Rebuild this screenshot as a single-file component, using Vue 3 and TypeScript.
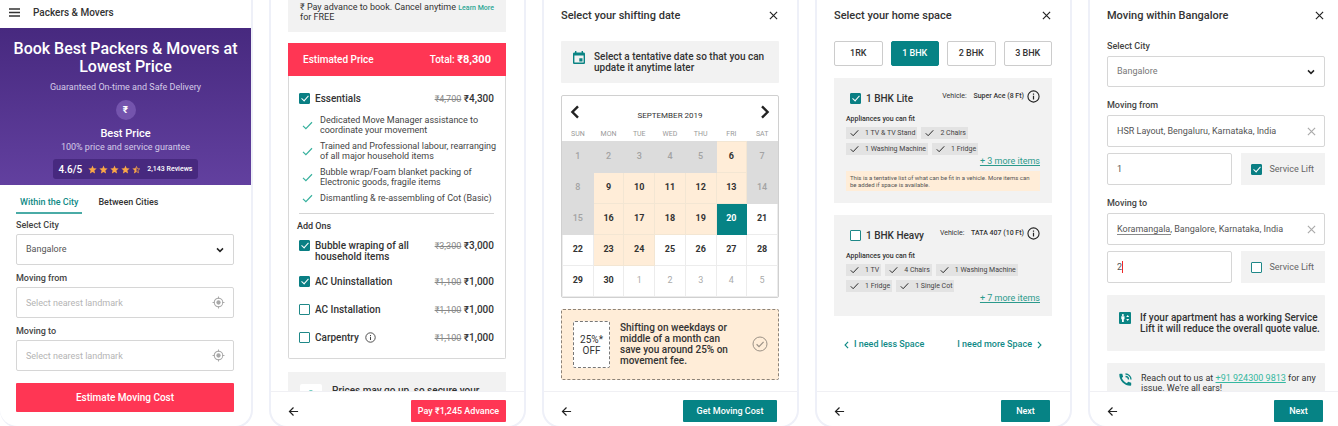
<script setup lang="ts">
import { reactive, ref } from 'vue'

interface AddOn { name: string; was: string; now: string; on: boolean; info?: boolean }
interface Plan { name: string; vehicle: string; on: boolean; fits: string[]; more: string; note?: string }
interface Day { n: number; kind: string }

const tab = ref('Within the City')
const city = ref('Bangalore')
const from = ref('')
const to = ref('')

const inclusions: string[] = [
  'Dedicated Move Manager assistance to coordinate your movement',
  'Trained and Professional labour, rearranging of all major household items',
  'Bubble wrap/Foam blanket packing of Electronic goods, fragile items',
  'Dismantling & re-assembling of Cot (Basic)',
]
const essentials = ref(true)
const addOns = reactive<AddOn[]>([
  { name: 'Bubble wraping of all household items', was: '₹3,300', now: '₹3,000', on: true },
  { name: 'AC Uninstallation', was: '₹1,100', now: '₹1,000', on: true },
  { name: 'AC Installation', was: '₹1,100', now: '₹1,000', on: false },
  { name: 'Carpentry', was: '₹1,100', now: '₹1,000', on: false, info: true },
])

const weekdays = ['SUN', 'MON', 'TUE', 'WED', 'THU', 'FRI', 'SAT']
const offer = [6, 9, 10, 11, 12, 13, 16, 17, 18, 19, 23, 24]
const picked = ref(20)
const past = [1, 2, 3, 4, 5, 7, 8, 14, 15]
const days: Day[] = Array.from({ length: 35 }, (_, i) => {
  const n = i + 1
  if (n > 30) return { n: n - 30, kind: 'next' }
  if (past.includes(n)) return { n, kind: 'past' }
  return { n, kind: offer.includes(n) ? 'offer' : 'open' }
})
const weeks: Day[][] = [0, 7, 14, 21, 28].map((s) => days.slice(s, s + 7))
const choose = (d: Day) => {
  if (d.kind === 'offer' || d.kind === 'open') picked.value = d.n
}

const sizes = ['1RK', '1 BHK', '2 BHK', '3 BHK']
const size = ref('1 BHK')
const plans = reactive<Plan[]>([
  {
    name: '1 BHK Lite', vehicle: 'Super Ace (8 Ft)', on: true,
    fits: ['1 TV & TV Stand', '2 Chairs', '1 Washing Machine', '1 Fridge'],
    more: '+ 3 more items',
    note: 'This is a tentative list of what can be fit in a vehicle. More items can be added if space is available.',
  },
  {
    name: '1 BHK Heavy', vehicle: 'TATA 407 (10 Ft)', on: false,
    fits: ['1 TV', '4 Chairs', '1 Washing Machine', '1 Fridge', '1 Single Cot'],
    more: '+ 7 more items',
  },
])

const stops = reactive([
  { id: 'from', label: 'Moving from', place: 'HSR Layout, Bengaluru, Karnataka, India', floor: '1', lift: true, editing: false },
  { id: 'to', label: 'Moving to', place: 'Koramangala, Bangalore, Karnataka, India', floor: '2', lift: false, editing: true },
])
</script>

<template>
  <svg class="defs" aria-hidden="true">
    <symbol id="i-chev" viewBox="0 0 10 10"><path d="M2 3.4 5 6.4 8 3.4" fill="none" stroke="currentColor" stroke-width="1.5" /></symbol>
    <symbol id="i-target" viewBox="0 0 14 14">
      <circle cx="7" cy="7" r="4.6" fill="none" stroke="currentColor" stroke-width="1.1" />
      <circle cx="7" cy="7" r="2.3" fill="currentColor" />
      <path d="M7 .6V3M7 11v2.4M.6 7H3M11 7h2.4" stroke="currentColor" stroke-width="1.2" />
    </symbol>
    <symbol id="i-tick" viewBox="0 0 12 10"><path d="M1 5.4 4.2 8.6 11 1.4" fill="none" stroke="currentColor" stroke-width="1.3" /></symbol>
    <symbol id="i-back" viewBox="0 0 12 12"><path d="M11 6H2M6 1.6 1.6 6 6 10.4" fill="none" stroke="currentColor" stroke-width="1.3" /></symbol>
    <symbol id="i-x" viewBox="0 0 10 10"><path d="M1 1l8 8M9 1 1 9" fill="none" stroke="currentColor" stroke-width="1.3" /></symbol>
    <symbol id="i-info" viewBox="0 0 14 14">
      <circle cx="7" cy="7" r="6" fill="none" stroke="currentColor" stroke-width="1.2" />
      <path d="M7 6.2v4M7 3.7v1.4" stroke="currentColor" stroke-width="1.3" />
    </symbol>
    <symbol id="i-star" viewBox="0 0 10 10"><path d="M5 .6 6.3 3.7 9.6 4 7.1 6.2 7.9 9.4 5 7.7 2.1 9.4 2.9 6.2.4 4l3.3-.3z" fill="currentColor" /></symbol>
    <symbol id="i-half" viewBox="0 0 10 10">
      <path d="M5 .6V7.7L2.1 9.4 2.9 6.2.4 4l3.3-.3z" fill="currentColor" />
      <path d="M5 1.6 6 4.1 8.6 4.3 6.6 6 7.2 8.6 5 7.3" fill="none" stroke="currentColor" stroke-width=".8" />
    </symbol>
  </svg>

  <main class="screens">
    <section class="phone first">
      <header class="appbar">
        <button class="icon-btn" aria-label="Menu">
          <svg width="11" height="9" viewBox="0 0 11 9"><path d="M0 1h11M0 4.5h11M0 8h11" stroke="#333" stroke-width="1.5" /></svg>
        </button>
        <span>Packers &amp; Movers</span>
      </header>
      <div class="hero">
        <h1>Book Best Packers &amp; Movers at Lowest Price</h1>
        <p class="soft">Guaranteed On-time and Safe Delivery</p>
        <div class="coin">₹</div>
        <strong>Best Price</strong>
        <p class="soft">100% price and service gurantee</p>
        <div class="rating">
          <b>4.6/5</b>
          <span class="stars">
            <svg v-for="i in 4" :key="i"><use href="#i-star" /></svg>
            <svg><use href="#i-half" /></svg>
          </span>
          <small>2,143 Reviews</small>
        </div>
      </div>
      <nav class="tabs">
        <button v-for="t in ['Within the City', 'Between Cities']" :key="t" :class="{ active: tab === t }" @click="tab = t">{{ t }}</button>
      </nav>
      <form class="quote" @submit.prevent>
        <label for="q-city">Select City</label>
        <div class="field">
          <select id="q-city" v-model="city"><option>Bangalore</option></select>
          <svg class="chev"><use href="#i-chev" /></svg>
        </div>
        <label for="q-from">Moving from</label>
        <div class="field">
          <input id="q-from" v-model="from" type="text" placeholder="Select nearest landmark" />
          <svg class="target"><use href="#i-target" /></svg>
        </div>
        <label for="q-to">Moving to</label>
        <div class="field">
          <input id="q-to" v-model="to" type="text" placeholder="Select nearest landmark" />
          <svg class="target"><use href="#i-target" /></svg>
        </div>
        <button class="cta">Estimate Moving Cost</button>
      </form>
    </section>

    <section class="phone">
      <div class="content">
        <div class="advance">
          <p>₹ Pay advance to book. Cancel anytime for FREE</p>
          <a href="#">Learn More</a>
        </div>
        <div class="bill">
          <div class="bill-head"><span>Estimated Price</span><span>Total: <b>₹8,300</b></span></div>
          <div class="bill-body">
            <div class="line">
              <input id="essentials" v-model="essentials" type="checkbox" />
              <label for="essentials">Essentials</label>
              <span class="cost"><s>₹4,700</s> ₹4,300</span>
            </div>
            <ul class="inclusions">
              <li v-for="t in inclusions" :key="t"><svg><use href="#i-tick" /></svg><span>{{ t }}</span></li>
            </ul>
            <hr />
            <h3>Add Ons</h3>
            <div v-for="(a, i) in addOns" :key="a.name" class="line addon">
              <input :id="'addon' + i" v-model="a.on" type="checkbox" />
              <label :for="'addon' + i">{{ a.name }}</label>
              <svg v-if="a.info" class="info"><use href="#i-info" /></svg>
              <span class="cost"><s>{{ a.was }}</s> {{ a.now }}</span>
            </div>
          </div>
        </div>
        <div class="secure">
          <span class="lock"><svg width="8" height="10" viewBox="0 0 8 10"><path d="M1.5 5V3.4a2.5 2.5 0 0 1 5 0V5M.6 5h6.8v4.4H.6z" fill="none" stroke="#2fb5a5" stroke-width="1.2" /></svg></span>
          <p>Prices may go up, so secure your</p>
        </div>
      </div>
      <footer>
        <button class="icon-btn" aria-label="Back"><svg class="back"><use href="#i-back" /></svg></button>
        <button class="action red">Pay ₹1,245 Advance</button>
      </footer>
    </section>

    <section class="phone">
      <div class="content">
        <header class="title"><h2>Select your shifting date</h2><button class="icon-btn" aria-label="Close"><svg class="close"><use href="#i-x" /></svg></button></header>
        <div class="hint">
          <svg width="12" height="13" viewBox="0 0 12 13"><path d="M2 1.5V0h1.4v1.5h5.2V0H10v1.5h.7c.7 0 1.3.6 1.3 1.3v8.9c0 .7-.6 1.3-1.3 1.3H1.3C.6 13 0 12.4 0 11.7V2.8c0-.7.6-1.3 1.3-1.3zM1.4 4.6v7h9.2v-7zM6.3 7.2h3.2v3.2H6.3z" fill="#0a8484" fill-rule="evenodd" /></svg>
          <p>Select a tentative date so that you can update it anytime later</p>
        </div>
        <div class="calendar">
          <div class="month">
            <button class="icon-btn" aria-label="Previous month"><svg width="10" height="14" viewBox="0 0 10 14"><path d="M8 1.4 2.4 7 8 12.6" fill="none" stroke="#222" stroke-width="2.4" /></svg></button>
            <span>SEPTEMBER 2019</span>
            <button class="icon-btn" aria-label="Next month"><svg width="10" height="14" viewBox="0 0 10 14"><path d="M2 1.4 7.6 7 2 12.6" fill="none" stroke="#222" stroke-width="2.4" /></svg></button>
          </div>
          <table>
            <thead><tr><th v-for="w in weekdays" :key="w">{{ w }}</th></tr></thead>
            <tbody>
              <tr v-for="(w, i) in weeks" :key="i">
                <td v-for="d in w" :key="d.n" :class="[d.kind, { picked: d.n === picked && d.kind !== 'next' }]" @click="choose(d)">{{ d.n }}</td>
              </tr>
            </tbody>
          </table>
        </div>
        <div class="promo">
          <div class="coupon">25%* OFF</div>
          <p>Shifting on weekdays or middle of a month can save you around 25% on movement fee.</p>
          <svg width="16" height="16" viewBox="0 0 16 16"><circle cx="8" cy="8" r="7" fill="none" stroke="#9b9186" /><path d="M4.6 8.3 7 10.6l4.6-4.8" fill="none" stroke="#9b9186" stroke-width="1.2" /></svg>
        </div>
      </div>
      <footer>
        <button class="icon-btn" aria-label="Back"><svg class="back"><use href="#i-back" /></svg></button>
        <button class="action wide">Get Moving Cost</button>
      </footer>
    </section>

    <section class="phone">
      <div class="content">
        <header class="title"><h2>Select your home space</h2><button class="icon-btn" aria-label="Close"><svg class="close"><use href="#i-x" /></svg></button></header>
        <div class="sizes">
          <button v-for="s in sizes" :key="s" :class="{ active: size === s }" @click="size = s">{{ s }}</button>
        </div>
        <article v-for="(p, i) in plans" :key="p.name" class="plan">
          <div class="plan-head">
            <input :id="'plan' + i" v-model="p.on" type="checkbox" />
            <label :for="'plan' + i">{{ p.name }}</label>
            <span class="vehicle">Vehicle: <b>{{ p.vehicle }}</b></span>
            <svg class="info big"><use href="#i-info" /></svg>
          </div>
          <h3>Appliances you can fit</h3>
          <ul class="chips">
            <li v-for="f in p.fits" :key="f"><svg><use href="#i-tick" /></svg>{{ f }}</li>
          </ul>
          <a href="#" class="more">{{ p.more }}</a>
          <p v-if="p.note" class="note">{{ p.note }}</p>
        </article>
        <div class="space-links">
          <button><svg viewBox="0 0 6 10"><path d="M5 1 1.2 5 5 9" /></svg>I need less Space</button>
          <button>I need more Space<svg viewBox="0 0 6 10"><path d="M1 1l3.8 4L1 9" /></svg></button>
        </div>
      </div>
      <footer>
        <button class="icon-btn" aria-label="Back"><svg class="back"><use href="#i-back" /></svg></button>
        <button class="action">Next</button>
      </footer>
    </section>

    <section class="phone last">
      <div class="content">
        <header class="title"><h2>Moving within Bangalore</h2><button class="icon-btn" aria-label="Close"><svg class="close"><use href="#i-x" /></svg></button></header>
        <form class="route" @submit.prevent>
          <label for="r-city">Select City</label>
          <div class="field city">
            <select id="r-city" v-model="city" class="pale"><option>Bangalore</option></select>
            <svg class="chev"><use href="#i-chev" /></svg>
          </div>
          <template v-for="s in stops" :key="s.id">
            <label :for="'r-' + s.id" class="stop-label">{{ s.label }}</label>
            <div class="field">
              <input :id="'r-' + s.id" v-model="s.place" type="text" spellcheck="false" />
              <span v-if="s.editing" class="composing"></span>
              <button class="icon-btn" aria-label="Clear"><svg class="clear"><use href="#i-x" /></svg></button>
            </div>
            <div class="floor-row">
              <div class="field">
                <input v-model="s.floor" type="text" aria-label="Floor" />
                <span v-if="s.editing" class="caret"></span>
              </div>
              <div class="lift">
                <input :id="'lift-' + s.id" v-model="s.lift" type="checkbox" />
                <label :for="'lift-' + s.id">Service Lift</label>
              </div>
            </div>
          </template>
        </form>
        <div class="hint lift-hint">
          <svg width="12" height="12" viewBox="0 0 12 12"><rect width="12" height="12" rx="1" fill="#0a8484" /><circle cx="3.9" cy="2.9" r="1" fill="#fff" /><path d="M2.3 4.3h3.2v2.9h-.7V10H3V7.2h-.7zM7.2 5.1 8.7 3l1.5 2.1zM7.2 6.9h3L8.7 9z" fill="#fff" /></svg>
          <p>If your apartment has a working Service Lift it will reduce the overall quote value.</p>
        </div>
        <div class="hint reach">
          <svg width="13" height="13" viewBox="0 0 13 13"><path d="M1 .8h2.3l.8 2.9L2.8 5.1C3.7 7.3 5.5 9.1 7.8 10.2l1.4-1.4 3 .9v2.4c0 .4-.3.7-.7.7C5.5 12.8.3 7.5.3 1.5.3 1.1.6.8 1 .8z" fill="#0a8484" /><path d="M6.5 1c3 0 5.5 2.5 5.5 5.5M6.5 3.5c1.7 0 3 1.3 3 3" fill="none" stroke="#0a8484" stroke-width="1.3" /></svg>
          <p>Reach out to us at <a href="tel:+919243009813">+91 924300 9813</a> for any issue. We're all ears!</p>
        </div>
      </div>
      <footer>
        <button class="icon-btn" aria-label="Back"><svg class="back"><use href="#i-back" /></svg></button>
        <button class="action">Next</button>
      </footer>
    </section>
  </main>
</template>

<style>
body { margin: 0; background: #fff; overflow: hidden; }
</style>

<style scoped>
.screens, .screens * { box-sizing: border-box; }
.defs { position: absolute; width: 0; height: 0; }
.screens {
  display: grid;
  grid-template-columns: 253fr 257fr 257fr 257fr 250fr;
  gap: 16px;
  height: 100vh;
  overflow: hidden;
  font: 9px/11px Roboto, "Liberation Sans", sans-serif;
  color: #333;
}
button, input, select { font: inherit; color: inherit; padding: 0; margin: 0; border: 0; background: none; }
button { cursor: pointer; }
h1, h2, h3, p, ul { margin: 0; padding: 0; font-weight: 500; }
p, ul { font-weight: 400; }
ul { list-style: none; }
svg { flex: none; display: block; }
.icon-btn { display: flex; align-items: center; }
.phone {
  display: flex;
  flex-direction: column;
  min-width: 0;
  height: calc(100vh + 2px);
  border: 2px solid #eef0f8;
  border-top: 0;
  border-radius: 0 0 18px 18px;
  overflow: hidden;
}
.first { border-left: 0; }
.last { border-right: 0; border-bottom-right-radius: 0; }
.content { flex: 1; min-height: 0; overflow: hidden; padding: 0 18px 0 17px; }
.last .content { padding-right: 13px; }

.appbar { display: flex; align-items: center; gap: 13px; height: 28px; padding: 0 9px 4px; font-size: 10px; font-weight: 500; flex: none; }
.hero {
  flex: none;
  display: flex;
  flex-direction: column;
  align-items: center;
  height: 157px;
  padding-top: 12px;
  background: linear-gradient(#47297f, #62409f);
  color: #fff;
  text-align: center;
}
.hero h1 { font-size: 16px; line-height: 18px; padding: 0 12px; }
.hero .soft { color: #d5cbe8; line-height: 13px; }
.hero h1 + .soft { margin-top: 5px; }
.coin { width: 20px; height: 20px; margin: 6px 0 7px; border-radius: 50%; background: #7454ad; font-weight: 700; font-size: 10px; line-height: 20px; }
.hero strong { font-size: 11px; line-height: 14px; font-weight: 500; }
.rating { display: flex; align-items: center; gap: 6px; height: 20px; margin-top: 5px; padding: 0 6px; border-radius: 3px; background: #47297f; }
.rating b { font-size: 10px; font-weight: 500; }
.stars { display: flex; gap: 2px; color: #f9a646; }
.stars svg { width: 9px; height: 9px; }
.rating small { font-size: 7px; font-weight: 500; }
.tabs { display: flex; gap: 12px; padding: 11px 16px 0; }
.tabs button { height: 18px; padding: 0 4px 4px; font-size: 9px; font-weight: 500; border-bottom: 2px solid transparent; }
.tabs .active { color: #0f8a86; border-color: #4aaba6; }
.quote { display: flex; flex-direction: column; padding: 5px 17px 0 16px; }
.quote label, .route > label { font-size: 9px; line-height: 12px; font-weight: 500; color: #444; }
.field { position: relative; display: flex; align-items: center; height: 31px; padding: 0 8px 0 9px; border: 1px solid #d6d6d6; border-radius: 2px; color: #555; }
.field input, .field select { flex: 1; min-width: 0; width: 100%; height: 100%; appearance: none; outline: 0; }
.field .pale { color: #777; }
.field input::placeholder { color: #b4b4b4; opacity: 1; }
.chev { width: 10px; height: 10px; color: #222; }
.target { width: 13px; height: 13px; color: #a9a9a9; }
.quote .field { margin: 3px 0 7px; }
.cta { height: 29px; margin-top: 5px; border-radius: 1px; background: #ff3654; color: #fff; font-size: 10px; font-weight: 500; }

input[type='checkbox'] { appearance: none; position: relative; flex: none; width: 11px; height: 11px; border: 1px solid #1f8888; background: #fff; border-radius: 1px; }
input[type='checkbox']:checked { background: #0a7f84; border-color: #0a7f84; }
input[type='checkbox']:checked::after { content: ''; position: absolute; left: 3px; top: 0; width: 3px; height: 6px; border: solid #fff; border-width: 0 1px 1px 0; transform: rotate(42deg); }

.advance { display: flex; height: 32px; padding: 2px 12px; background: #f2f2f2; line-height: 10px; }
.advance p { flex: 1; }
.advance a { font-size: 7px; font-weight: 500; color: #2ba695; text-decoration: none; line-height: 12px; }
.bill { margin-top: 11px; border: 1px solid #d8d8d8; border-top: 0; border-radius: 0 0 2px 2px; }
.bill-head { display: flex; justify-content: space-between; align-items: center; height: 33px; margin: 0 -1px; padding: 0 15px; background: #ff3654; color: #fff; font-size: 10px; font-weight: 500; }
.bill-head b { font-size: 11px; font-weight: 700; }
.bill-body { padding: 17px 11px 14px 10px; }
.line { display: flex; align-items: flex-start; gap: 5px; font-size: 10px; line-height: 11px; font-weight: 500; }
.line label { max-width: 100px; }
.cost { margin-left: auto; white-space: nowrap; }
.cost s { font-weight: 400; font-size: 9px; color: #888; }
.inclusions { display: grid; gap: 6px; margin: 10px -8px 0 0; line-height: 10px; font-size: 9px; }
.inclusions li { display: flex; align-items: center; gap: 7px; padding-left: 3px; color: #444; }
.inclusions svg { width: 11px; height: 9px; color: #35b09d; }
hr { height: 1px; margin: 10px 0 7px; border: 0; background: #d4d4d4; }
.bill h3 { font-size: 9px; line-height: 11px; margin-left: -2px; }
.addon { margin-top: 16px; }
h3 + .addon { margin-top: 8px; }
h3 + .addon + .addon { margin-top: 14px; }
.info { width: 11px; height: 11px; color: #444; }
.addon .info { margin-left: 1px; }
.secure { display: flex; gap: 10px; margin-top: 13px; padding: 12px; background: #f2f2f2; font-size: 10px; height: 50px; }
.secure p { font-weight: 500; line-height: 13px; }
.lock { width: 22px; height: 22px; flex: none; display: flex; align-items: center; justify-content: center; background: #fff; border-radius: 2px; }

footer { flex: none; display: flex; justify-content: space-between; align-items: flex-start; height: 35px; padding: 8px 20px 0 17px; border-top: 1px solid #f0f0f4; }
footer .icon-btn { height: 22px; }
.last footer { padding-right: 15px; }
.back { width: 11px; height: 11px; color: #222; }
.action { height: 22px; min-width: 49px; padding: 0 6px; border-radius: 1px; background: #068385; color: #fff; font-size: 9px; font-weight: 500; }
.action.wide { min-width: 94px; }
.action.red { background: #ff3654; min-width: 95px; margin-right: -2px; }

.title { display: flex; justify-content: space-between; align-items: center; padding: 9px 1px 12px 0; }
.title h2 { font-size: 11px; line-height: 13px; }
.close { width: 9px; height: 9px; color: #222; }
.hint { display: flex; gap: 9px; padding: 10px 4px 10px 12px; margin-top: 7px; background: #f2f2f2; border-radius: 1px; font-size: 10px; line-height: 11px; }
.hint p { font-weight: 500; }
.calendar { margin-top: 12px; border: 1px solid #d0d0d0; border-radius: 2px; }
.month { display: flex; justify-content: space-between; align-items: center; height: 31px; padding: 0 8px; font-size: 8px; }
.month span { padding-top: 7px; }
table { width: 100%; table-layout: fixed; border-collapse: collapse; }
th { font-size: 7px; font-weight: 400; color: #999; height: 14px; padding: 2px 0 0; }
td { height: 31px; padding: 0; text-align: center; font-size: 9px; font-weight: 700; border: 1px solid #ececec; }
td.past { background: #dcdcdc; border-color: #dcdcdc; color: #a3a3a3; font-weight: 500; }
td.next { color: #aaa; font-weight: 400; }
td.offer { background: #ffedd8; border-color: #f3e6d3; }
td.picked { background: #068385; border-color: #068385; color: #fff; }
.promo { display: flex; align-items: center; gap: 10px; margin-top: 11px; height: 71px; padding: 0 10px 0 11px; border: 1px dashed #8d8378; border-radius: 2px; background: #ffedd8; }
.promo p { flex: 1; font-size: 10px; line-height: 11px; font-weight: 500; }
.coupon { width: 37px; height: 47px; flex: none; padding: 12px 4px; border: 1px dashed #777; border-radius: 2px; background: #fff; font-size: 10px; text-align: center; }

.sizes { display: grid; grid-template-columns: repeat(4, 1fr); gap: 8px; margin-top: 7px; }
.sizes button { height: 25px; border: 1px solid #ccc; border-radius: 2px; font-weight: 500; font-size: 9px; }
.sizes .active { background: #068385; border-color: #068385; color: #fff; }
.plan { margin-top: 12px; padding: 12px; background: #f2f2f2; }
.plan-head { display: flex; align-items: flex-start; padding-left: 4px; }
.plan-head input, .plan-head label { margin-top: 3px; }
.plan-head label { margin-left: 5px; font-size: 10px; font-weight: 500; }
.vehicle { margin-left: auto; font-size: 7px; line-height: 13px; white-space: nowrap; }
.vehicle b { font-weight: 500; margin-left: 5px; }
.info.big { width: 13px; height: 13px; margin-left: 3px; color: #222; }
.plan h3 { margin-top: 10px; font-size: 7px; line-height: 11px; }
.chips { display: flex; flex-wrap: wrap; gap: 4px; margin-top: 2px; font-size: 7px; }
.chips li { display: flex; align-items: center; gap: 6px; height: 12px; padding: 0 2px 0 4px; background: #e3e3e3; color: #444; }
.chips svg { width: 9px; height: 8px; color: #222; }
.more { display: block; margin-top: 1px; text-align: right; font-size: 9px; color: #2b9a8c; }
.note { margin-top: 4px; padding: 3px 4px; background: #ffedd8; font-size: 6px; line-height: 7px; color: #555; }
.space-links { display: flex; justify-content: space-between; padding: 23px 10px; font-size: 9px; font-weight: 500; color: #0f8a86; }
.space-links button { display: flex; align-items: center; gap: 5px; }
.space-links svg { width: 5px; height: 8px; fill: none; stroke: currentColor; stroke-width: 1.4; }

.route { display: flex; flex-direction: column; margin-top: 6px; }
.route > label { line-height: 13px; }
.route .field { margin-top: 3px; height: 32px; }
.route .city { height: 31px; }
.route .stop-label { margin-top: 12px; }
.clear { width: 9px; height: 9px; color: #aaa; }
.floor-row { display: grid; grid-template-columns: 3fr 2fr; gap: 9px; margin-top: 6px; }
.route .floor-row .field { margin: 0; }
.lift { display: flex; align-items: center; gap: 7px; padding-left: 10px; background: #f2f2f2; font-size: 9px; color: #666; }
.composing { position: absolute; left: 9px; top: 20px; width: 54px; height: 1px; background: #888; }
.caret { position: absolute; left: 14px; top: 9px; width: 1px; height: 12px; background: #f02828; }
.lift-hint { margin-top: 12px; padding-top: 17px; padding-bottom: 17px; }
.reach { margin-top: 12px; font-size: 9px; line-height: 10px; }
.reach p { font-weight: 400; }
.reach a { color: #35b8a0; }
</style>
